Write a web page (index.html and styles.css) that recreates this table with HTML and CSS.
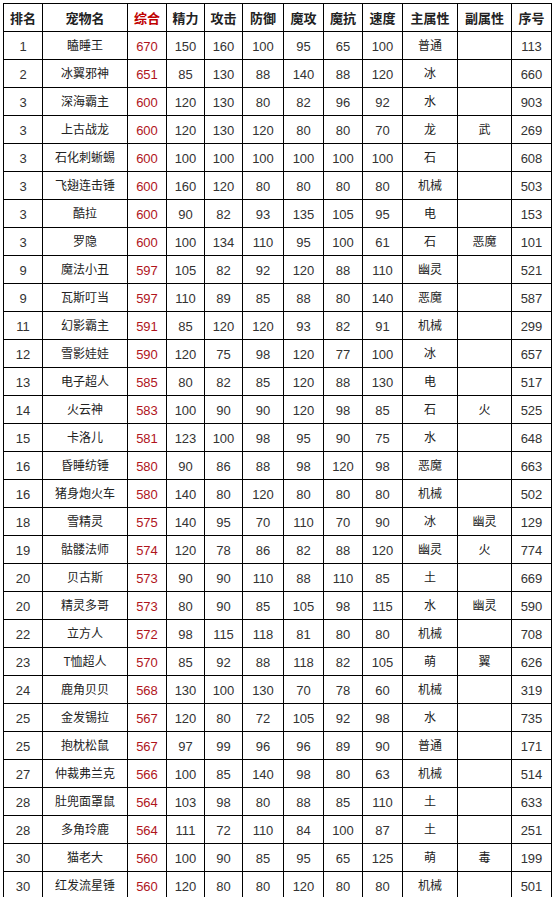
FILE: index.html
```html
<!DOCTYPE html>
<html lang="zh">
<head>
<meta charset="utf-8">
<link rel="stylesheet" href="styles.css">
</head>
<body>
<table class="pets">
<colgroup>
<col class="c-rank"><col class="c-name"><col class="c-total"><col class="c-s1"><col class="c-s2"><col class="c-s3"><col class="c-s4"><col class="c-s5"><col class="c-s6"><col class="c-main"><col class="c-sub"><col class="c-id">
</colgroup>
<thead>
<tr><th>排名</th><th>宠物名</th><th class="red">综合</th><th>精力</th><th>攻击</th><th>防御</th><th>魔攻</th><th>魔抗</th><th>速度</th><th>主属性</th><th>副属性</th><th>序号</th></tr>
</thead>
<tbody>
<tr><td>1</td><td class="cn">瞌睡王</td><td class="red">670</td><td>150</td><td>160</td><td>100</td><td>95</td><td>65</td><td>100</td><td class="cn">普通</td><td class="cn"></td><td>113</td></tr>
<tr><td>2</td><td class="cn">冰翼邪神</td><td class="red">651</td><td>85</td><td>130</td><td>88</td><td>140</td><td>88</td><td>120</td><td class="cn">冰</td><td class="cn"></td><td>660</td></tr>
<tr><td>3</td><td class="cn">深海霸主</td><td class="red">600</td><td>120</td><td>130</td><td>80</td><td>82</td><td>96</td><td>92</td><td class="cn">水</td><td class="cn"></td><td>903</td></tr>
<tr><td>3</td><td class="cn">上古战龙</td><td class="red">600</td><td>120</td><td>130</td><td>120</td><td>80</td><td>80</td><td>70</td><td class="cn">龙</td><td class="cn">武</td><td>269</td></tr>
<tr><td>3</td><td class="cn">石化刺蜥蜴</td><td class="red">600</td><td>100</td><td>100</td><td>100</td><td>100</td><td>100</td><td>100</td><td class="cn">石</td><td class="cn"></td><td>608</td></tr>
<tr><td>3</td><td class="cn">飞翅连击锤</td><td class="red">600</td><td>160</td><td>120</td><td>80</td><td>80</td><td>80</td><td>80</td><td class="cn">机械</td><td class="cn"></td><td>503</td></tr>
<tr><td>3</td><td class="cn">酷拉</td><td class="red">600</td><td>90</td><td>82</td><td>93</td><td>135</td><td>105</td><td>95</td><td class="cn">电</td><td class="cn"></td><td>153</td></tr>
<tr><td>3</td><td class="cn">罗隐</td><td class="red">600</td><td>100</td><td>134</td><td>110</td><td>95</td><td>100</td><td>61</td><td class="cn">石</td><td class="cn">恶魔</td><td>101</td></tr>
<tr><td>9</td><td class="cn">魔法小丑</td><td class="red">597</td><td>105</td><td>82</td><td>92</td><td>120</td><td>88</td><td>110</td><td class="cn">幽灵</td><td class="cn"></td><td>521</td></tr>
<tr><td>9</td><td class="cn">瓦斯叮当</td><td class="red">597</td><td>110</td><td>89</td><td>85</td><td>88</td><td>80</td><td>140</td><td class="cn">恶魔</td><td class="cn"></td><td>587</td></tr>
<tr><td>11</td><td class="cn">幻影霸主</td><td class="red">591</td><td>85</td><td>120</td><td>120</td><td>93</td><td>82</td><td>91</td><td class="cn">机械</td><td class="cn"></td><td>299</td></tr>
<tr><td>12</td><td class="cn">雪影娃娃</td><td class="red">590</td><td>120</td><td>75</td><td>98</td><td>120</td><td>77</td><td>100</td><td class="cn">冰</td><td class="cn"></td><td>657</td></tr>
<tr><td>13</td><td class="cn">电子超人</td><td class="red">585</td><td>80</td><td>82</td><td>85</td><td>120</td><td>88</td><td>130</td><td class="cn">电</td><td class="cn"></td><td>517</td></tr>
<tr><td>14</td><td class="cn">火云神</td><td class="red">583</td><td>100</td><td>90</td><td>90</td><td>120</td><td>98</td><td>85</td><td class="cn">石</td><td class="cn">火</td><td>525</td></tr>
<tr><td>15</td><td class="cn">卡洛儿</td><td class="red">581</td><td>123</td><td>100</td><td>98</td><td>95</td><td>90</td><td>75</td><td class="cn">水</td><td class="cn"></td><td>648</td></tr>
<tr><td>16</td><td class="cn">昏睡纺锤</td><td class="red">580</td><td>90</td><td>86</td><td>88</td><td>98</td><td>120</td><td>98</td><td class="cn">恶魔</td><td class="cn"></td><td>663</td></tr>
<tr><td>16</td><td class="cn">猪身炮火车</td><td class="red">580</td><td>140</td><td>80</td><td>120</td><td>80</td><td>80</td><td>80</td><td class="cn">机械</td><td class="cn"></td><td>502</td></tr>
<tr><td>18</td><td class="cn">雪精灵</td><td class="red">575</td><td>140</td><td>95</td><td>70</td><td>110</td><td>70</td><td>90</td><td class="cn">冰</td><td class="cn">幽灵</td><td>129</td></tr>
<tr><td>19</td><td class="cn">骷髅法师</td><td class="red">574</td><td>120</td><td>78</td><td>86</td><td>82</td><td>88</td><td>120</td><td class="cn">幽灵</td><td class="cn">火</td><td>774</td></tr>
<tr><td>20</td><td class="cn">贝古斯</td><td class="red">573</td><td>90</td><td>90</td><td>110</td><td>88</td><td>110</td><td>85</td><td class="cn">土</td><td class="cn"></td><td>669</td></tr>
<tr><td>20</td><td class="cn">精灵多哥</td><td class="red">573</td><td>80</td><td>90</td><td>85</td><td>105</td><td>98</td><td>115</td><td class="cn">水</td><td class="cn">幽灵</td><td>590</td></tr>
<tr><td>22</td><td class="cn">立方人</td><td class="red">572</td><td>98</td><td>115</td><td>118</td><td>81</td><td>80</td><td>80</td><td class="cn">机械</td><td class="cn"></td><td>708</td></tr>
<tr><td>23</td><td class="cn">T恤超人</td><td class="red">570</td><td>85</td><td>92</td><td>88</td><td>118</td><td>82</td><td>105</td><td class="cn">萌</td><td class="cn">翼</td><td>626</td></tr>
<tr><td>24</td><td class="cn">鹿角贝贝</td><td class="red">568</td><td>130</td><td>100</td><td>130</td><td>70</td><td>78</td><td>60</td><td class="cn">机械</td><td class="cn"></td><td>319</td></tr>
<tr><td>25</td><td class="cn">金发锡拉</td><td class="red">567</td><td>120</td><td>80</td><td>72</td><td>105</td><td>92</td><td>98</td><td class="cn">水</td><td class="cn"></td><td>735</td></tr>
<tr><td>25</td><td class="cn">抱枕松鼠</td><td class="red">567</td><td>97</td><td>99</td><td>96</td><td>96</td><td>89</td><td>90</td><td class="cn">普通</td><td class="cn"></td><td>171</td></tr>
<tr><td>27</td><td class="cn">仲裁弗兰克</td><td class="red">566</td><td>100</td><td>85</td><td>140</td><td>98</td><td>80</td><td>63</td><td class="cn">机械</td><td class="cn"></td><td>514</td></tr>
<tr><td>28</td><td class="cn">肚兜面罩鼠</td><td class="red">564</td><td>103</td><td>98</td><td>80</td><td>88</td><td>85</td><td>110</td><td class="cn">土</td><td class="cn"></td><td>633</td></tr>
<tr><td>28</td><td class="cn">多角玲鹿</td><td class="red">564</td><td>111</td><td>72</td><td>110</td><td>84</td><td>100</td><td>87</td><td class="cn">土</td><td class="cn"></td><td>251</td></tr>
<tr><td>30</td><td class="cn">猫老大</td><td class="red">560</td><td>100</td><td>90</td><td>85</td><td>95</td><td>65</td><td>125</td><td class="cn">萌</td><td class="cn">毒</td><td>199</td></tr>
<tr><td>30</td><td class="cn">红发流星锤</td><td class="red">560</td><td>120</td><td>80</td><td>80</td><td>120</td><td>80</td><td>80</td><td class="cn">机械</td><td class="cn"></td><td>501</td></tr>
</tbody>
</table>
</body>
</html>
```
FILE: styles.css
```css
html, body {
  margin: 0;
  padding: 0;
  background: #fff;
}
body {
  padding: 3px 0 0 3px;
}
.pets {
  border-collapse: collapse;
  table-layout: fixed;
  width: 549px;
  font-family: "Liberation Sans", Arial, "Noto Sans CJK SC", sans-serif;
  font-size: 13px;
  line-height: 16px;
  color: #333;
}
.c-rank { width: 39px; }
.c-name { width: 85px; }
.c-total { width: 39px; }
.c-s1 { width: 38px; }
.c-s2 { width: 38px; }
.c-s3 { width: 41px; }
.c-s4 { width: 40px; }
.c-s5 { width: 39px; }
.c-s6 { width: 40px; }
.c-main { width: 55px; }
.c-sub { width: 54px; }
.c-id { width: 40px; }
.pets th, .pets td {
  border: 1px solid #000;
  padding: 0;
  height: 27px;
  text-align: center;
  vertical-align: middle;
  white-space: nowrap;
  overflow: hidden;
}
.pets td {
  padding-top: 2px;
  height: 25px;
}
.pets th {
  font-family: "Noto Sans CJK SC", sans-serif;
  font-weight: bold;
  font-size: 13px;
  color: #222;
}
.pets td.cn {
  font-family: "Noto Sans CJK SC", sans-serif;
  font-size: 12px;
  padding-top: 0;
  padding-bottom: 2px;
  color: #222;
}
.pets .red {
  color: #b0141c;
}
.pets th.red {
  color: #c00000;
}
```
